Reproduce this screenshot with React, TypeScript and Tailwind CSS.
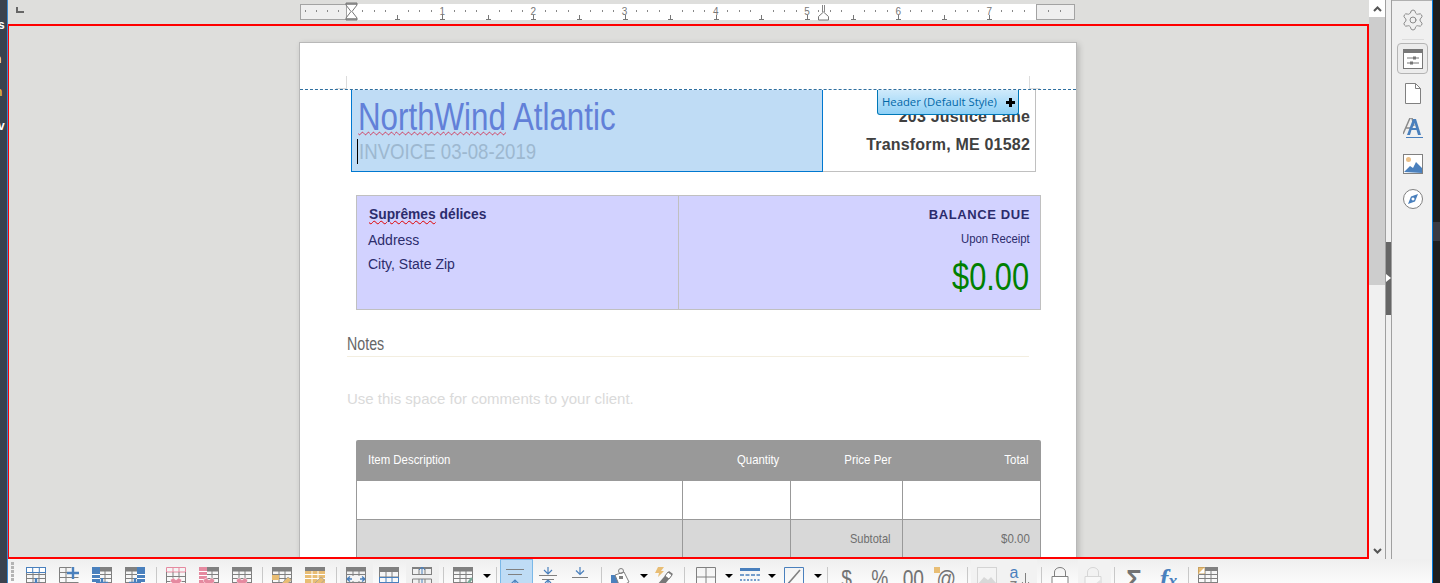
import { Settings } from "lucide-react";
import type { ReactNode } from "react";

const GRAY = "#808080";
const BLUE = "#4a80bd";
const PINK = "#e58aa0";
const YELLOW = "#e8bd74";

const Svg = ({ children }: { children: ReactNode }) => (
  <svg width="20" height="20" viewBox="0 0 20 20" fill="none" className="shrink-0">
    {children}
  </svg>
);

const Grid = ({ color = GRAY }: { color?: string }) => (
  <g stroke={color} strokeWidth="1">
    <rect x="0.5" y="0.5" width="19" height="18" />
    <rect x="0" y="0" width="20" height="4" fill={color} />
    <path d="M0.5 7.5h19M0.5 11.5h19M0.5 15.5h19M7 4v15M13 4v15" />
  </g>
);

const Mark = ({ color = BLUE }: { color?: string }) => (
  <path d="M10 11v5M4 16h12" stroke={color} strokeWidth="2.4" />
);

const Heart = () => (
  <path d="M4.500 12.500l3-1.500 2.500 2 2.500-2 3 1.500v2l-5.500 5-5.500-5z" fill={PINK} stroke="#fff" strokeWidth="0.5" />
);

const Pencil = () => (
  <path d="M9 17l7-7 3.500 3-7 7h-3.500z" fill={YELLOW} stroke="#999" strokeWidth="0.7" />
);

const icons: Record<string, ReactNode> = {
  rowAbove: (
    <Svg>
      <Grid />
      <rect x="0.5" y="0.5" width="19" height="5" fill="#fff" stroke={BLUE} />
      <path d="M6.7 0.5v5M13.3 0.5v5" stroke={BLUE} />
      <path d="M10 11v6M5 17h10" stroke={BLUE} strokeWidth="2.4" />
    </Svg>
  ),
  rowBelow: (
    <Svg>
      <path d="M0.5 0.5h12M0.5 5.5h19M0.5 10.5h19M0.5 15.5h19M0.5 0.5v15M7 0v15" stroke={GRAY} />
      <path d="M14 0v12M8 6h12" stroke={BLUE} strokeWidth="2.4" />
    </Svg>
  ),
  colBefore: (
    <Svg>
      <Grid />
      <rect x="0" y="0" width="8" height="19" fill={BLUE} />
      <path d="M0 7.5h8M0 11.5h8M0 15.5h8" stroke="#fff" />
      <Mark />
    </Svg>
  ),
  colAfter: (
    <Svg>
      <Grid />
      <rect x="12" y="0" width="8" height="19" fill={BLUE} />
      <path d="M12 7.5h8M12 11.5h8M12 15.5h8" stroke="#fff" />
      <Mark />
    </Svg>
  ),
  delRow: (
    <Svg>
      <path d="M0.5 0.5h19v4.5h-19zM7 0.5v4.5M13 0.5v4.5" stroke={PINK} />
      <path d="M0.5 5v14M19.5 5v14M0.5 9.5h19M0.5 14.5h19M7 5v14M13 5v14" stroke={GRAY} />
      <Heart />
    </Svg>
  ),
  delCol: (
    <Svg>
      <Grid />
      <rect x="0" y="0" width="8" height="19" fill={PINK} />
      <path d="M0 4.5h8M0 8.5h8M0 12.5h8" stroke="#fff" />
      <Heart />
    </Svg>
  ),
  delTable: (
    <Svg>
      <Grid />
      <Heart />
    </Svg>
  ),
  cell: (
    <Svg>
      <Grid />
      <rect x="0" y="8" width="7" height="5" fill={YELLOW} />
      <Pencil />
    </Svg>
  ),
  table: (
    <Svg>
      <Grid />
      <rect x="0" y="4" width="20" height="15" fill={YELLOW} />
      <path d="M0 7.5h20M0 11.5h20M7 4v15M13 4v15" stroke="#fff" />
      <Pencil />
    </Svg>
  ),
  sizeCols: (
    <Svg>
      <Grid />
      <rect x="4" y="9" width="12" height="5" fill="#f5f5f5" />
      <path d="M1 12h5M14 12h5M1 12l3-2.500M1 12l3 2.500M19 12l-3-2.500M19 12l-3 2.500" stroke={BLUE} strokeWidth="1.3" />
    </Svg>
  ),
  sizeRows: (
    <Svg>
      <rect x="0" y="0" width="20" height="5" fill={GRAY} />
      <path d="M0.5 5v5h19V5M7 5v5M13 5v5" stroke={GRAY} />
      <rect x="0.5" y="10.500" width="19" height="5" stroke={BLUE} />
      <path d="M7 10.500v5M13 10.500v5" stroke={BLUE} />
    </Svg>
  ),
  splitRows: (
    <Svg>
      <rect x="0.5" y="0.5" width="19" height="7" stroke={GRAY} />
      <rect x="0" y="0" width="20" height="2" fill={GRAY} />
      <path d="M7 0v8M13 0v8M0.5 12h19v6h-19zM7 12v6M13 12v6" stroke={GRAY} />
      <path d="M10 0v7M7 3l3-3 3 3M10 12v7M7 16l3 3 3-3" stroke={BLUE} />
    </Svg>
  ),
  tableCheck: (
    <Svg>
      <Grid />
      <path d="M10 16l3 3 6-8" stroke="#7aa898" strokeWidth="2.400" />
    </Svg>
  ),
  alignTop: (
    <Svg>
      <path d="M0 1.500h18M2 6.500h14" stroke={GRAY} />
      <path d="M9 13v8M5 16l4-4 4 4" stroke={BLUE} strokeWidth="1.2" />
    </Svg>
  ),
  alignMid: (
    <Svg>
      <path d="M9 0v6M5 3l4 4 4-4" stroke={BLUE} strokeWidth="1.2" />
      <path d="M0 8.500h18M3 12.500h12" stroke={GRAY} />
      <path d="M9 14v6M6 16l3-3 3 3" stroke={BLUE} strokeWidth="1.2" />
    </Svg>
  ),
  alignBottom: (
    <Svg>
      <path d="M9 0v7M5 3.500l4 4 4-4" stroke={BLUE} strokeWidth="1.2" />
      <path d="M1 10.500h16" stroke={GRAY} />
    </Svg>
  ),
  fill: (
    <Svg>
      <path d="M0 8h7v10H0z" fill={BLUE} />
      <path d="M4 8l9-3 5 10-9 5z" fill="#fff" stroke={GRAY} />
      <circle cx="10" cy="4" r="2.500" stroke={GRAY} />
      <rect x="8" y="9" width="4" height="3" fill={GRAY} />
    </Svg>
  ),
  wand: (
    <Svg>
      <path d="M4 0h6L7 4h3L4 10l1-4H1z" fill={YELLOW} />
      <path d="M3 18L15 4l4 3L8 21z" fill="#777" />
      <path d="M11 9l3-4 4 3-3 4z" fill="#fff" stroke="#777" />
    </Svg>
  ),
  borders: (
    <Svg>
      <path d="M0.5 0.5h19v19h-19zM10 0v20M0 10h20" stroke={GRAY} />
    </Svg>
  ),
  borderStyle: (
    <Svg>
      <path d="M0 2.500h20" stroke={BLUE} strokeWidth="3" />
      <path d="M0 8h20" stroke={BLUE} strokeWidth="1.500" strokeDasharray="4 1.500" />
      <path d="M0 13h20" stroke={BLUE} strokeWidth="1.500" strokeDasharray="2 1.500" />
    </Svg>
  ),
  diagonal: (
    <Svg>
      <path d="M0.500 0.500h19v19h-19z" stroke={BLUE} />
      <path d="M3 18L16 3" stroke={GRAY} strokeWidth="1.600" />
      <path d="M2 19l3-4 1.500 1.500z" fill={BLUE} />
    </Svg>
  ),
  image: (
    <Svg>
      <rect x="0.500" y="0.500" width="19" height="18" stroke="#d4d4d4" fill="#f4f4f4" />
      <path d="M1 17l6-7 4 3 3-3 5 6v2H1z" fill="#d8d8d8" />
    </Svg>
  ),
  lock: (
    <Svg>
      <path d="M3.500 9V5a5.500 4.500 0 0 1 11 0v4" stroke={GRAY} />
      <path d="M1 9.500h16v10H1z" fill="#fff" stroke={GRAY} />
    </Svg>
  ),
  lockOff: (
    <Svg>
      <path d="M3.500 9V5a5.500 4.500 0 0 1 11 0v4" stroke="#d6d6d6" />
      <path d="M1 9.500h16v10H1z" fill="#f8f8f8" stroke="#d6d6d6" />
      <path d="M10 18l6-5 2 2-5 5z" fill="#e2e2e2" />
    </Svg>
  ),
  autoTable: (
    <Svg>
      <rect x="7" y="0" width="13" height="4" fill={GRAY} />
      <path d="M0.500 7.500h19v12h-19zM0.500 11.500h19M0.500 15.500h19M7 4v16M13 4v16M19.500 4v4" stroke={GRAY} />
      <rect x="0.500" y="0.500" width="6" height="6" fill={YELLOW} stroke="#c9a260" />
      <path d="M0.500 6.500L6.500 0.500V6.500z" fill="#fff" />
    </Svg>
  ),
};

const Cell = ({ children, w = "w-[33px]", bg = "" }: { children: ReactNode; w?: string; bg?: string }) => (
  <div className={`${w} ${bg} flex h-full shrink-0 justify-center pt-[8px] pr-px`}>{children}</div>
);

const Sep = ({ w = "w-[8px]" }: { w?: string }) => (
  <div className={`${w} flex h-full shrink-0 justify-center pt-[8px]`}>
    <div className="h-[20px] w-px bg-[#c8c8c8]" />
  </div>
);

const Drop = ({ w = "w-[13px]" }: { w?: string }) => (
  <div className={`${w} flex h-full shrink-0 justify-center pt-[15px]`}>
    <div className="h-0 w-0 border-x-[4px] border-t-[4px] border-x-transparent border-t-black" />
  </div>
);

const Glyph = ({ children }: { children: ReactNode }) => (
  <div className="scale-x-[0.8] text-[24px] leading-[24px] text-[#737373]">{children}</div>
);

const Toolbar = () => (
  <div className="flex h-[24px] w-full items-start overflow-hidden bg-gradient-to-b from-[#efefef] to-[#fbfbfb] font-['Liberation_Sans',sans-serif]">
    <div className="flex h-full w-[12px] shrink-0 flex-col items-end gap-[1px] pt-[3px] pr-[6px]">
      {[0, 1, 2, 3, 4].map((i) => (
        <div key={i} className="h-[3px] w-[3px] bg-[#b4b4b4]" />
      ))}
    </div>
    <Cell>{icons.rowAbove}</Cell>
    <Cell>{icons.rowBelow}</Cell>
    <Cell>{icons.colBefore}</Cell>
    <Cell>{icons.colAfter}</Cell>
    <Sep />
    <Cell>{icons.delRow}</Cell>
    <Cell>{icons.delCol}</Cell>
    <Cell>{icons.delTable}</Cell>
    <Sep w="w-[7px]" />
    <Cell>{icons.cell}</Cell>
    <Cell>{icons.table}</Cell>
    <Sep />
    <Cell bg="bg-[#f0f0f0]">{icons.sizeCols}</Cell>
    <Cell>{icons.sizeRows}</Cell>
    <Cell bg="bg-[#f0f0f0]">{icons.splitRows}</Cell>
    <Sep />
    <Cell>{icons.tableCheck}</Cell>
    <Drop />
    <Sep w="w-[7px]" />
    <Cell bg="border border-b-0 border-[#7ab8e8] bg-[#bfdcf5]">{icons.alignTop}</Cell>
    <Cell w="w-[32px]">{icons.alignMid}</Cell>
    <Cell w="w-[32px]">{icons.alignBottom}</Cell>
    <Sep />
    <Cell w="w-[32px]">{icons.fill}</Cell>
    <Drop />
    <Cell w="w-[29px]">{icons.wand}</Cell>
    <Sep w="w-[10px]" />
    <Cell w="w-[34px]">{icons.borders}</Cell>
    <Drop w="w-[11px]" />
    <Cell>{icons.borderStyle}</Cell>
    <Drop w="w-[10px]" />
    <Cell w="w-[34px]">{icons.diagonal}</Cell>
    <Drop />
    <Sep w="w-[7px]" />
    <Cell><Glyph>$</Glyph></Cell>
    <Cell><Glyph>%</Glyph></Cell>
    <Cell><Glyph>00</Glyph></Cell>
    <Cell>
      <div className="relative">
        <Glyph>@</Glyph>
        <div className="absolute top-0 left-0 h-[6px] w-[6px] bg-[#e8bd74]" />
      </div>
    </Cell>
    <Sep />
    <Cell bg="bg-[#f2f2f2]">{icons.image}</Cell>
    <Cell bg="bg-[#f2f2f2]">
      <div className="flex items-start gap-[3px]">
        <div className="flex flex-col text-[16px] leading-[12px] text-[#4a80bd]">
          <span>a</span>
          <span className="text-[#808080]">z</span>
        </div>
        <svg width="9" height="18" viewBox="0 0 9 18" fill="none" className="mt-[2px]">
          <path d="M4.500 4v13M1 13l3.500 4 3.500-4" stroke={GRAY} />
        </svg>
      </div>
    </Cell>
    <Sep />
    <Cell>{icons.lock}</Cell>
    <Cell bg="bg-[#f2f2f2]">{icons.lockOff}</Cell>
    <Sep w="w-[7px]" />
    <Cell>
      <div className="text-[26px] leading-[24px] font-bold text-[#737373]">Σ</div>
    </Cell>
    <Cell w="w-[34px]">
      <div className="pl-[2px] font-['Liberation_Serif',serif] text-[26px] leading-[24px] font-bold text-[#4a80bd] italic">
        f<span className="text-[18px]">x</span>
      </div>
    </Cell>
    <Sep w="w-[7px]" />
    <Cell>{icons.autoTable}</Cell>
  </div>
);

const Ruler = () => {
  const x0 = 51;
  const inch = 91.2;
  const marks = Array.from({ length: 60 }, (_, i) => i).filter((i) => x0 + (i * inch) / 8 < 730 && i > 0);
  return (
    <svg width="775" height="16" viewBox="0 0 775 16" className="shrink-0 overflow-visible">
      <rect width="775" height="16" fill="#fff" />
      <rect x="0.500" y="0.500" width="46" height="15" fill="#efefef" stroke="#a3a3a3" />
      <rect x="736.500" y="0.500" width="38" height="15" fill="#efefef" stroke="#a3a3a3" />
      {[5, 16, 27, 38, 748, 760].map((x) => (
        <rect key={x} x={x} y={6} width={1} height={2} fill="#888" />
      ))}
      {marks.map((i) => {
        const x = Math.round(x0 + (i * inch) / 8);
        if (i % 4 === 0) return <path key={i} d={`M${x + 0.5} 11v4M${x - 2} 15.500h5`} stroke="#777" />;
        return <rect key={i} x={x} y={6} width={1} height={2} fill="#888" />;
      })}
      {[1, 2, 3, 4, 5, 6, 7].map((n) => (
        <text key={n} x={x0 + n * inch} y={11} textAnchor="middle" fontSize="10" fill="#777" fontFamily="Liberation Sans">
          {n}
        </text>
      ))}
      <path d="M46 -1h11v2l-5 6.500 5 6.500v2H46v-2l5-6.500-5-6.500z" fill="#fff" stroke="#777" />
      <path d="M46 0h11M46 15h11" stroke="#777" strokeWidth="1.500" />
      <path d="M523.500 8l5 4.500v3.500h-10v-3.500z" fill="#fff" stroke="#777" />
      <path d="M522.500 1v7M524.500 1v7" stroke="#888" />
    </svg>
  );
};

const Page = () => (
  <div className="mx-auto w-[778px] border border-[#b8b8b8] bg-white font-['Liberation_Sans',sans-serif] shadow-[2px_2px_6px_rgba(0,0,0,0.18)]">
    <div className="relative h-[47px] border-b border-dashed border-[#2f6f9f]">
      <div className="absolute bottom-0 left-[36px] h-[13px] w-[11px] border-r border-b border-[#dcdcdc]" />
      <div className="absolute right-[36px] bottom-0 h-[13px] w-[11px] border-b border-l border-[#dcdcdc]" />
    </div>

    <div className="relative ml-[51px] flex h-[82px] w-[685px] border-r border-b border-[#c0c0c0]">
      <div className="h-[82px] w-[472px] border-x border-b border-[#0078d0] bg-[#bfdcf5] pl-[6px]">
        <div className="mt-[4px] text-[38px] leading-[46px] whitespace-nowrap text-[#6280d8]">
          <span className="inline-block origin-left scale-x-[0.824]">
            <span className="underline decoration-[#d03050] decoration-wavy decoration-1 underline-offset-[1px]">NorthWind</span> Atlantic
          </span>
        </div>
        <div className="-mt-px -ml-px flex items-center text-[22px] leading-[24px] whitespace-nowrap text-[#9db8d0]">
          <span className="mr-px inline-block h-[25px] w-px shrink-0 bg-black" />
          <span className="inline-block origin-left scale-x-[0.847]">INVOICE 03-08-2019</span>
        </div>
      </div>
      <div className="flex flex-1 flex-col items-end pt-[13px] pr-[5px] text-[16px] leading-[28px] font-bold tracking-[0.2px] text-[#404040]">
        <span>203 Justice Lane</span>
        <span>Transform, ME 01582</span>
      </div>
      <div className="absolute top-0 left-[526px] flex h-[25px] w-[142px] items-center gap-[9px] rounded-b-[3px] border border-t-0 border-[#0078b8] bg-gradient-to-b from-[#cfeafb] to-[#8ed0f6] pl-[4px]">
        <span className="font-['Open_Sans',sans-serif] text-[11.3px] whitespace-nowrap text-[#0068a8]">Header (Default Style)</span>
        <svg width="9" height="9" viewBox="0 0 9 9" className="shrink-0">
          <path d="M3 0h3v3h3v3H6v3H3V6H0V3h3z" fill="#000" />
        </svg>
      </div>
    </div>

    <div className="mt-[23px] ml-[56px] flex h-[115px] w-[685px] border border-[#c0c0c0] bg-[#d2d2ff] text-[#2c2c6c]">
      <div className="w-[322px] border-r border-[#c0c0c0] pt-[7px] pl-[11px] text-[14px] leading-[24px]">
        <div className="pl-px text-[13.8px] font-bold">
          <span className="underline decoration-[#e00000] decoration-wavy decoration-1">Suprêmes</span> délices
        </div>
        <div className="mt-px">Address</div>
        <div>City, State Zip</div>
      </div>
      <div className="flex flex-1 flex-col items-end pt-[7px] pr-[10px]">
        <div className="text-[13px] leading-[24px] font-bold tracking-[0.6px]">BALANCE DUE</div>
        <div className="origin-right scale-x-[0.873] text-[13px] leading-[24px] whitespace-nowrap">Upon Receipt</div>
        <div className="mt-[5px] mr-px origin-right scale-x-[0.81] text-[38px] leading-[42px] text-[#008000]">$0.00</div>
      </div>
    </div>

    <div className="mt-[24px] ml-[47px] w-[682px] border-b border-[#f3eee0] pb-[1px] text-[18px] leading-[21px] text-[#666]">
      <span className="inline-block origin-left scale-x-[0.79]">Notes</span>
    </div>
    <div className="mt-[33px] ml-[47px] text-[15px] leading-[18px] whitespace-nowrap text-[#dadada]">
      Use this space for comments to your client.
    </div>

    <div className="mt-[32px] ml-[56px] w-[685px] text-[13.500px]">
      <div className="grid h-[41px] grid-cols-[326px_108px_112px_139px] items-center rounded-t-[2px] bg-[#999] text-white">
        <div className="pl-[12px]"><span className="inline-block origin-left scale-x-[0.845]">Item Description</span></div>
        <div className="pr-[11px] text-right"><span className="inline-block origin-right scale-x-[0.84]">Quantity</span></div>
        <div className="pr-[10px] text-right"><span className="inline-block origin-right scale-x-[0.85]">Price Per</span></div>
        <div className="pr-[12px] text-right"><span className="inline-block origin-right scale-x-[0.85]">Total</span></div>
      </div>
      <div className="grid h-[38px] grid-cols-[326px_108px_112px_139px] border-x border-[#999]">
        <div className="border-r border-[#999]" />
        <div className="border-r border-[#999]" />
        <div className="border-r border-[#999]" />
        <div />
      </div>
      <div className="grid h-[40px] grid-cols-[326px_108px_112px_139px] items-center border border-[#999] bg-[#d8d8d8] text-[#6e6e6e]">
        <div className="flex h-full border-r border-[#999]" />
        <div className="flex h-full border-r border-[#999]" />
        <div className="flex h-full items-center justify-end border-r border-[#999] pr-[11px]">
          <span className="inline-block origin-right scale-x-[0.82]">Subtotal</span>
        </div>
        <div className="pr-[12px] text-right"><span className="inline-block origin-right scale-x-[0.85]">$0.00</span></div>
      </div>
    </div>
  </div>
);

const Sidebar = () => (
  <div className="flex w-[41px] shrink-0 flex-col items-center border-t border-[#b0b0b0] bg-[#f0f0f0]">
    <Settings size={24} strokeWidth={1} color="#8a8a8a" className="mt-[7px]" />
    <div className="mt-[7px] h-px w-[22px] bg-[#dcdcdc]" />
    <div className="mt-[3px] flex h-[31px] w-[31px] items-center justify-center rounded-[4px] border border-[#b4b4b4] bg-[#ececec]">
      <svg width="20" height="20" viewBox="0 0 20 20" fill="none">
        <rect x="0.500" y="0.500" width="19" height="19" fill="#fff" stroke="#777" />
        <rect width="20" height="4" fill="#777" />
        <path d="M4 9h12M4 14h12" stroke="#777" />
        <rect x="10" y="7.500" width="3" height="3" fill="#777" />
        <rect x="7" y="12.500" width="3" height="3" fill="#777" />
      </svg>
    </div>
    <svg width="16" height="21" viewBox="0 0 16 21" fill="none" className="mt-[9px]">
      <path d="M0.500 0.500h10l5 5v15h-15z" fill="#fff" stroke="#808080" />
      <path d="M10.500 0.500v5h5" stroke="#808080" />
    </svg>
    <svg width="20" height="21" viewBox="0 0 20 21" fill="none" className="mt-[14px]">
      <path d="M0 16L7 0h2l2 8M3 10h5" stroke="#8a8a8a" strokeWidth="1.500" />
      <path d="M4 17L10 1h3l5 16h-3l-1.500-5h-5L7 17zM9.500 10h3.500L11.500 5z" fill={BLUE} fillRule="evenodd" />
      <path d="M3 19.500h17" stroke={BLUE} />
    </svg>
    <svg width="20" height="20" viewBox="0 0 20 20" fill="none" className="mt-[15px]">
      <rect x="0.500" y="0.500" width="19" height="19" fill="#fff" stroke="#808080" />
      <circle cx="5.500" cy="5.500" r="2.500" fill="#ecc088" />
      <path d="M1 18l6-6 3 2 3-6 6 6v5z" fill={BLUE} />
    </svg>
    <svg width="20" height="20" viewBox="0 0 20 20" fill="none" className="mt-[15px]">
      <circle cx="10" cy="10" r="9.500" fill="#fff" stroke="#808080" />
      <path d="M15 5l-7 2.500-3 7.500 7-2.500zM10 8.500a1.500 1.500 0 1 0 0.010 0z" fill={BLUE} fillRule="evenodd" />
    </svg>
  </div>
);

const App = () => (
  <div className="relative flex h-[583px] w-[1440px] overflow-hidden bg-[#dededc]">
    <div className="flex w-[7px] shrink-0 flex-col bg-[#3a424e] pt-[9px] font-['Liberation_Sans',sans-serif] text-[12px] leading-[33.500px] font-bold text-white">
      <span className="-ml-[2px]">s</span>
      <span className="-ml-[6px]">n</span>
      <span className="-ml-[5px] text-[#e0b040]">n</span>
      <span className="-ml-[2px]">v</span>
    </div>

    <div className="flex min-w-0 flex-1 flex-col border-l border-[#3a88d0]">
      <div className="flex min-h-0 flex-1">
        <div className="relative flex w-[1361px] shrink-0 flex-col overflow-hidden bg-[#dededc]">
          <div className="flex h-[24px] shrink-0 items-start pt-[4px] pl-[292px]">
            <Ruler />
          </div>
          <div className="min-h-0 flex-1 overflow-hidden pt-[18px] pr-[1px]">
            <Page />
          </div>
          <div className="absolute top-[7px] left-[8px] h-[6px] w-[8px] border-b-2 border-l-2 border-[#666]" />
          <div className="pointer-events-none absolute inset-x-0 top-[24px] bottom-0 -ml-px border-2 border-[#ff0000]" />
        </div>

        <div className="flex w-[16px] shrink-0 flex-col bg-[#f0f0f0]">
          <div className="flex h-[17px] items-center justify-center bg-white text-[#555]">
            <svg width="9" height="6" viewBox="0 0 9 6" fill="none">
              <path d="M1 5l3.500-3.500L8 5" stroke="currentColor" strokeWidth="2" />
            </svg>
          </div>
          <div className="h-[268px] bg-[#cdcdcd]" />
          <div className="flex-1" />
          <div className="flex h-[17px] items-center justify-center text-[#555]">
            <svg width="9" height="6" viewBox="0 0 9 6" fill="none">
              <path d="M1 1l3.500 3.500L8 1" stroke="currentColor" strokeWidth="2" />
            </svg>
          </div>
        </div>

        <div className="flex w-[7px] shrink-0 flex-col border-x border-[#a0a0a0] bg-[#f0f0f0]">
          <div className="mt-[242px] flex h-[73px] items-center bg-[#666]">
            <div className="mb-[2px] h-0 w-0 border-y-[4px] border-l-[5px] border-y-transparent border-l-white" />
          </div>
        </div>

        <Sidebar />
      </div>
      <Toolbar />
    </div>

    <div className="flex w-[8px] shrink-0 flex-col border-l border-[#0078d7] bg-[#1e1e1e]">
      <div className="mt-[222px] h-[19px] bg-[#3a3a42]" />
    </div>
  </div>
);

export default App;
